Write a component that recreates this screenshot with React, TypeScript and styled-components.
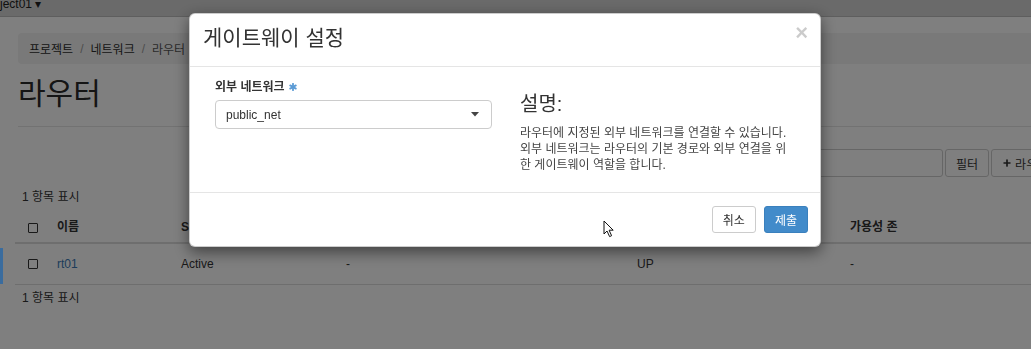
import styled, { createGlobalStyle } from "styled-components";
import { Plus } from "lucide-react";

const GlobalStyle = createGlobalStyle`
  html, body { margin: 0; padding: 0; overflow: hidden; }
  body {
    font-family: "Liberation Sans", "Noto Sans CJK KR", Arial, sans-serif;
    font-size: 12px;
    color: #333;
    background: #fff;
  }
`

export default function App() {
    return (
        <>
            <GlobalStyle/>
            <Page>
                <TopBar><ProjectName>ject01 ▾</ProjectName></TopBar>
                <Content>
                    <Breadcrumb>
                        <Crumb>프로젝트</Crumb><Sep>/</Sep>
                        <Crumb>네트워크</Crumb><Sep>/</Sep>
                        <Crumb active>라우터</Crumb>
                    </Breadcrumb>
                    <PageHeader><h1>라우터</h1></PageHeader>
                    <Toolbar>
                        <FilterInput/>
                        <ToolButton>필터</ToolButton>
                        <ToolButton><Plus size={10} strokeWidth={4}/>라우터 생성</ToolButton>
                    </Toolbar>
                    <ItemCount>1 항목 표시</ItemCount>
                    <Table>
                        <HeadRow>
                            <Check/>
                            <span>이름</span>
                            <span>Status</span>
                            <span>외부 네트워크</span>
                            <span>관리 상태</span>
                            <span>가용성 존</span>
                        </HeadRow>
                        <BodyRow>
                            <Check/>
                            <Link>rt01</Link>
                            <span>Active</span>
                            <span>-</span>
                            <span>UP</span>
                            <span>-</span>
                        </BodyRow>
                    </Table>
                    <ItemCount after>1 항목 표시</ItemCount>
                </Content>
            </Page>

            <Backdrop>
                <RowMarker/>
                <Dialog>
                    <Header>
                        <Title>게이트웨이 설정</Title>
                        <Close>×</Close>
                    </Header>
                    <Body>
                        <Field>
                            <Label>
                                외부 네트워크
                                <svg width="8" height="8" viewBox="0 0 8 8">
                                    <g stroke="#5b9bd5" strokeWidth="1.8" strokeLinecap="round">
                                        <line x1="4" y1="0.8" x2="4" y2="7.2"/>
                                        <line x1="1.2" y1="2.4" x2="6.8" y2="5.6"/>
                                        <line x1="1.2" y1="5.6" x2="6.8" y2="2.4"/>
                                    </g>
                                </svg>
                            </Label>
                            <Select>
                                public_net
                                <svg width="8" height="5" viewBox="0 0 8 5">
                                    <path d="M0 0 H8 L4 4.5 Z" fill="#444"/>
                                </svg>
                            </Select>
                        </Field>
                        <Help>
                            <HelpTitle>설명:</HelpTitle>
                            <HelpText>
                                라우터에 지정된 외부 네트워크를 연결할 수 있습니다.<br/>
                                외부 네트워크는 라우터의 기본 경로와 외부 연결을 위<br/>
                                한 게이트웨이 역할을 합니다.
                            </HelpText>
                        </Help>
                    </Body>
                    <Footer>
                        <Button>취소</Button>
                        <Button variant='primary'>제출</Button>
                    </Footer>
                </Dialog>
                <Cursor width="12" height="18" viewBox="0 0 12 18">
                    <path d="M1 1 L1 14 L4 11 L6.6 16.6 L8.6 15.7 L6.1 10.2 L10.2 10.2 Z"
                          fill="#fff" stroke="#111" strokeWidth="1" strokeLinejoin="round"/>
                </Cursor>
            </Backdrop>
        </>
    )
}

const Page = styled.div`
  width: 1140px;
  height: 349px;
  background: #fff;
`
const TopBar = styled.div`
  height: 16px;
  background: #d4d4d4;
  border-bottom: 1px solid #bdbdbd;
`
const ProjectName = styled.div`
  line-height: 8px;
  font-size: 12px;
  color: #222;
`
const Content = styled.div`
  padding: 16px 0 0 15px;
`
const Breadcrumb = styled.div`
  margin-left: 3px;
  height: 31px;
  display: flex;
  align-items: center;
  gap: 2px;
  padding: 0 11px;
  background: #f3f3f3;
  border-radius: 4px;
`
const Crumb = styled.span<{ active?: boolean }>`
  color: ${props => props.active ? '#555' : '#2c2c2c'};
`
const Sep = styled.span`
  padding: 0 5px;
  color: #9a9a9a;
`
const PageHeader = styled.div`
  margin-left: 3px;
  padding: 14px 0 16px;
  border-bottom: 1px solid #e4e4e4;
  h1 {
    margin: 0;
    font-size: 30px;
    line-height: 32px;
    font-weight: 400;
    color: #2a2a2a;
  }
`
const Toolbar = styled.div`
  margin-top: 22px;
  display: flex;
  height: 28px;
`
const FilterInput = styled.div`
  margin-left: 685px;
  width: 241px;
  border: 1px solid #ccc;
  border-radius: 3px;
`
const ToolButton = styled.div`
  display: flex;
  align-items: center;
  gap: 3px;
  padding: 0 10px;
  border: 1px solid #ccc;
  border-radius: 3px;
  margin-left: 2px;
  white-space: nowrap;
  color: #333;
  &:first-of-type { margin-left: 3px; }
`
const ItemCount = styled.div<{ after?: boolean }>`
  padding-left: 7px;
  margin-top: ${props => props.after ? '5px' : '12px'};
  line-height: 17px;
`
const Table = styled.div`
  width: 1100px;
`
const rowGrid = `
  display: grid;
  grid-template-columns: 29px 124px 165px 291px 213px 1fr;
  align-items: center;
  padding-left: 13px;
`
const HeadRow = styled.div`
  ${rowGrid};
  padding-top: 13px;
  padding-bottom: 6px;
  line-height: 17px;
  font-weight: 700;
  border-bottom: 2px solid #ddd;
`
const BodyRow = styled.div`
  ${rowGrid};
  height: 40px;
  border-bottom: 1px solid #ddd;
`
const Check = styled.span`
  width: 8px;
  height: 8px;
  border: 1px solid #333;
  border-radius: 1px;
`
const Link = styled.span`
  color: #3b79b5;
`

const Backdrop = styled.div`
  position: fixed;
  inset: 0;
  background: rgba(0, 0, 0, 0.5);
`
const RowMarker = styled.div`
  position: absolute;
  left: 0;
  top: 248px;
  width: 3px;
  height: 36px;
  background: #3a6c9e;
`
const Dialog = styled.div`
  margin: 13px 0 0 189px;
  width: 630px;
  background: #fff;
  border: 1px solid rgba(0, 0, 0, 0.2);
  border-radius: 6px;
  box-shadow: 0 5px 15px rgba(0, 0, 0, 0.5);
`
const Header = styled.div`
  display: flex;
  justify-content: space-between;
  align-items: flex-start;
  padding: 12px 12px 16px 13px;
  border-bottom: 1px solid #e5e5e5;
`
const Title = styled.h4`
  margin: 0;
  font-size: 21px;
  line-height: 24px;
  font-weight: 400;
  color: #333;
`
const Close = styled.span`
  margin-top: -4px;
  font-size: 22px;
  line-height: 22px;
  font-weight: 700;
  color: #000;
  opacity: 0.2;
`
const Body = styled.div`
  display: flex;
  gap: 28px;
  height: 113px;
  padding: 12px 26px 0 25px;
`
const Field = styled.div`
  width: 277px;
`
const Label = styled.div`
  display: flex;
  align-items: center;
  gap: 4px;
  line-height: 16px;
  font-weight: 700;
  margin-bottom: 5px;
`
const Select = styled.div`
  height: 27px;
  display: flex;
  align-items: center;
  justify-content: space-between;
  padding: 0 12px 0 10px;
  border: 1px solid #ccc;
  border-radius: 4px;
`
const Help = styled.div`
  padding-top: 14px;
`
const HelpTitle = styled.h3`
  margin: 0 0 10px;
  font-size: 20px;
  line-height: 22px;
  font-weight: 400;
  color: #333;
`
const HelpText = styled.p`
  margin: 0;
  font-size: 12px;
  line-height: 16px;
  white-space: nowrap;
  color: #444;
`
const Footer = styled.div`
  display: flex;
  justify-content: flex-end;
  gap: 8px;
  padding: 13px 12px;
  border-top: 1px solid #e5e5e5;
`
type ButtonProps = {
    variant?: 'default' | 'primary'
}
const Button = styled.button<ButtonProps>`
  height: 27px;
  padding: 0 10px;
  font-family: inherit;
  font-size: 12px;
  border-radius: 3px;
  background: ${props => props.variant === 'primary' ? '#428bca' : '#fff'};
  border: 1px solid ${props => props.variant === 'primary' ? '#3a80bd' : '#ccc'};
  color: ${props => props.variant === 'primary' ? '#fff' : '#333'};
`
const Cursor = styled.svg`
  position: absolute;
  left: 603px;
  top: 220px;
`
